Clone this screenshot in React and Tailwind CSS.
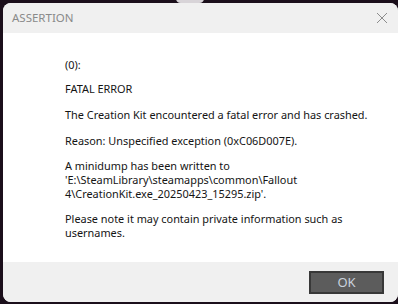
export default function App() {
  const font = { fontFamily: '"Segoe UI", "Noto Sans", "Open Sans", sans-serif' };
  return (
    <div className="relative w-[398px] h-[304px] bg-[#1b0f1b] overflow-hidden" style={font}>
      <div className="absolute left-[176px] top-[-6px] w-[28px] h-[9px] rounded-full bg-[#d8d4d8]" />
      <div className="ml-[3px] pt-[3px]">
        <div className="w-[395px] h-[299px] rounded-[8px] overflow-hidden flex flex-col bg-white">
          <div className="h-[30px] bg-[#f0f0f0] flex items-center justify-between pl-[9px] pr-[9px] shrink-0">
            <span className="text-[11.5px] text-[#8a8a8a]">ASSERTION</span>
            <svg width="12" height="12" viewBox="0 0 12 12" className="mr-[1px]">
              <path d="M1 1 L11 11 M11 1 L1 11" stroke="#8c8c8c" strokeWidth="1" fill="none" />
            </svg>
          </div>
          <div className="flex-1 bg-white pl-[62px] pt-[25px] text-[10.9px] leading-[14px] text-[#141414]">
            <p>(0):</p>
            <p className="mt-[10px]">FATAL ERROR</p>
            <p className="mt-[12px]">The Creation Kit encountered a fatal error and has crashed.</p>
            <p className="mt-[12px]">Reason: Unspecified exception (0xC06D007E).</p>
            <p className="mt-[11px]">A minidump has been written to<br />'E:\SteamLibrary\steamapps\common\Fallout<br />4\CreationKit.exe_20250423_15295.zip'.</p>
            <p className="mt-[11px]">Please note it may contain private information such as<br />usernames.</p>
          </div>
          <div className="h-[40px] bg-[#f0f0f0] flex items-start justify-end pr-[14px] pt-[9px] shrink-0">
            <button className="w-[75px] h-[23px] bg-[#5c5c5c] border-2 border-[#383838] text-[#c9d2dc] text-[13px] leading-none flex items-center justify-center">OK</button>
          </div>
        </div>
      </div>
    </div>
  );
}
